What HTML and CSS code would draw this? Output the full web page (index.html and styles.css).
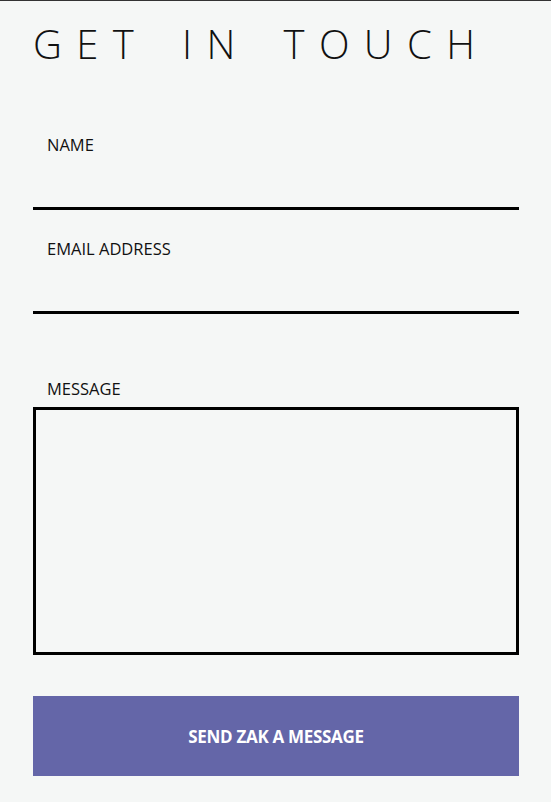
FILE: index.html
```html
<!DOCTYPE html>
<html lang="en">
<head>
<meta charset="utf-8">
<title>Get in touch</title>
<link rel="stylesheet" href="styles.css">
</head>
<body>
<main class="page">
  <h1 class="title">GET IN TOUCH</h1>
  <form class="form">
    <div class="field field-name">
      <label class="label" for="name">NAME</label>
      <input class="line-input" id="name" type="text">
    </div>
    <div class="field field-email">
      <label class="label" for="email">EMAIL ADDRESS</label>
      <input class="line-input" id="email" type="email">
    </div>
    <div class="field field-message">
      <label class="label" for="message">MESSAGE</label>
      <textarea class="box-input" id="message"></textarea>
    </div>
    <button class="send" type="button">SEND ZAK A MESSAGE</button>
  </form>
</main>
</body>
</html>
```

FILE: styles.css
```css
html, body {
  margin: 0;
  padding: 0;
}
body {
  background: #f5f7f6;
  border-top: 1px solid #333;
  font-family: "Open Sans", "Noto Sans", sans-serif;
  color: #111;
  min-height: 801px;
}
.page {
  padding: 0 32px 0 33px;
}
.title {
  margin: 19px 0 0 0;
  font-weight: 300;
  font-size: 40px;
  line-height: 48px;
  letter-spacing: 14.4px;
  word-spacing: 9px;
  white-space: nowrap;
  color: #111;
}
.form {
  display: flex;
  flex-direction: column;
}
.field {
  display: flex;
  flex-direction: column;
}
.field-name { margin-top: 65px; }
.field-email { margin-top: 27px; }
.field-message { margin-top: 63px; }
.label {
  padding-left: 14px;
  font-size: 16.5px;
  line-height: 24px;
  color: #111;
}
.line-input {
  display: block;
  height: 53px;
  box-sizing: border-box;
  margin: 0;
  padding: 0 14px;
  border: 0;
  border-bottom: 3px solid #000;
  background: transparent;
  font: inherit;
  outline: none;
}
.box-input {
  display: block;
  margin: 6px 0 0 0;
  height: 248px;
  box-sizing: border-box;
  border: 3px solid #000;
  background: transparent;
  resize: none;
  font: inherit;
  padding: 10px;
  outline: none;
}
.send {
  margin-top: 41px;
  height: 80px;
  border: 0;
  background: #6466a8;
  color: #fff;
  font-family: "Open Sans", "Noto Sans", sans-serif;
  font-weight: 700;
  font-size: 17px;
  letter-spacing: -0.3px;
  padding-top: 2px;
  cursor: pointer;
}
```
